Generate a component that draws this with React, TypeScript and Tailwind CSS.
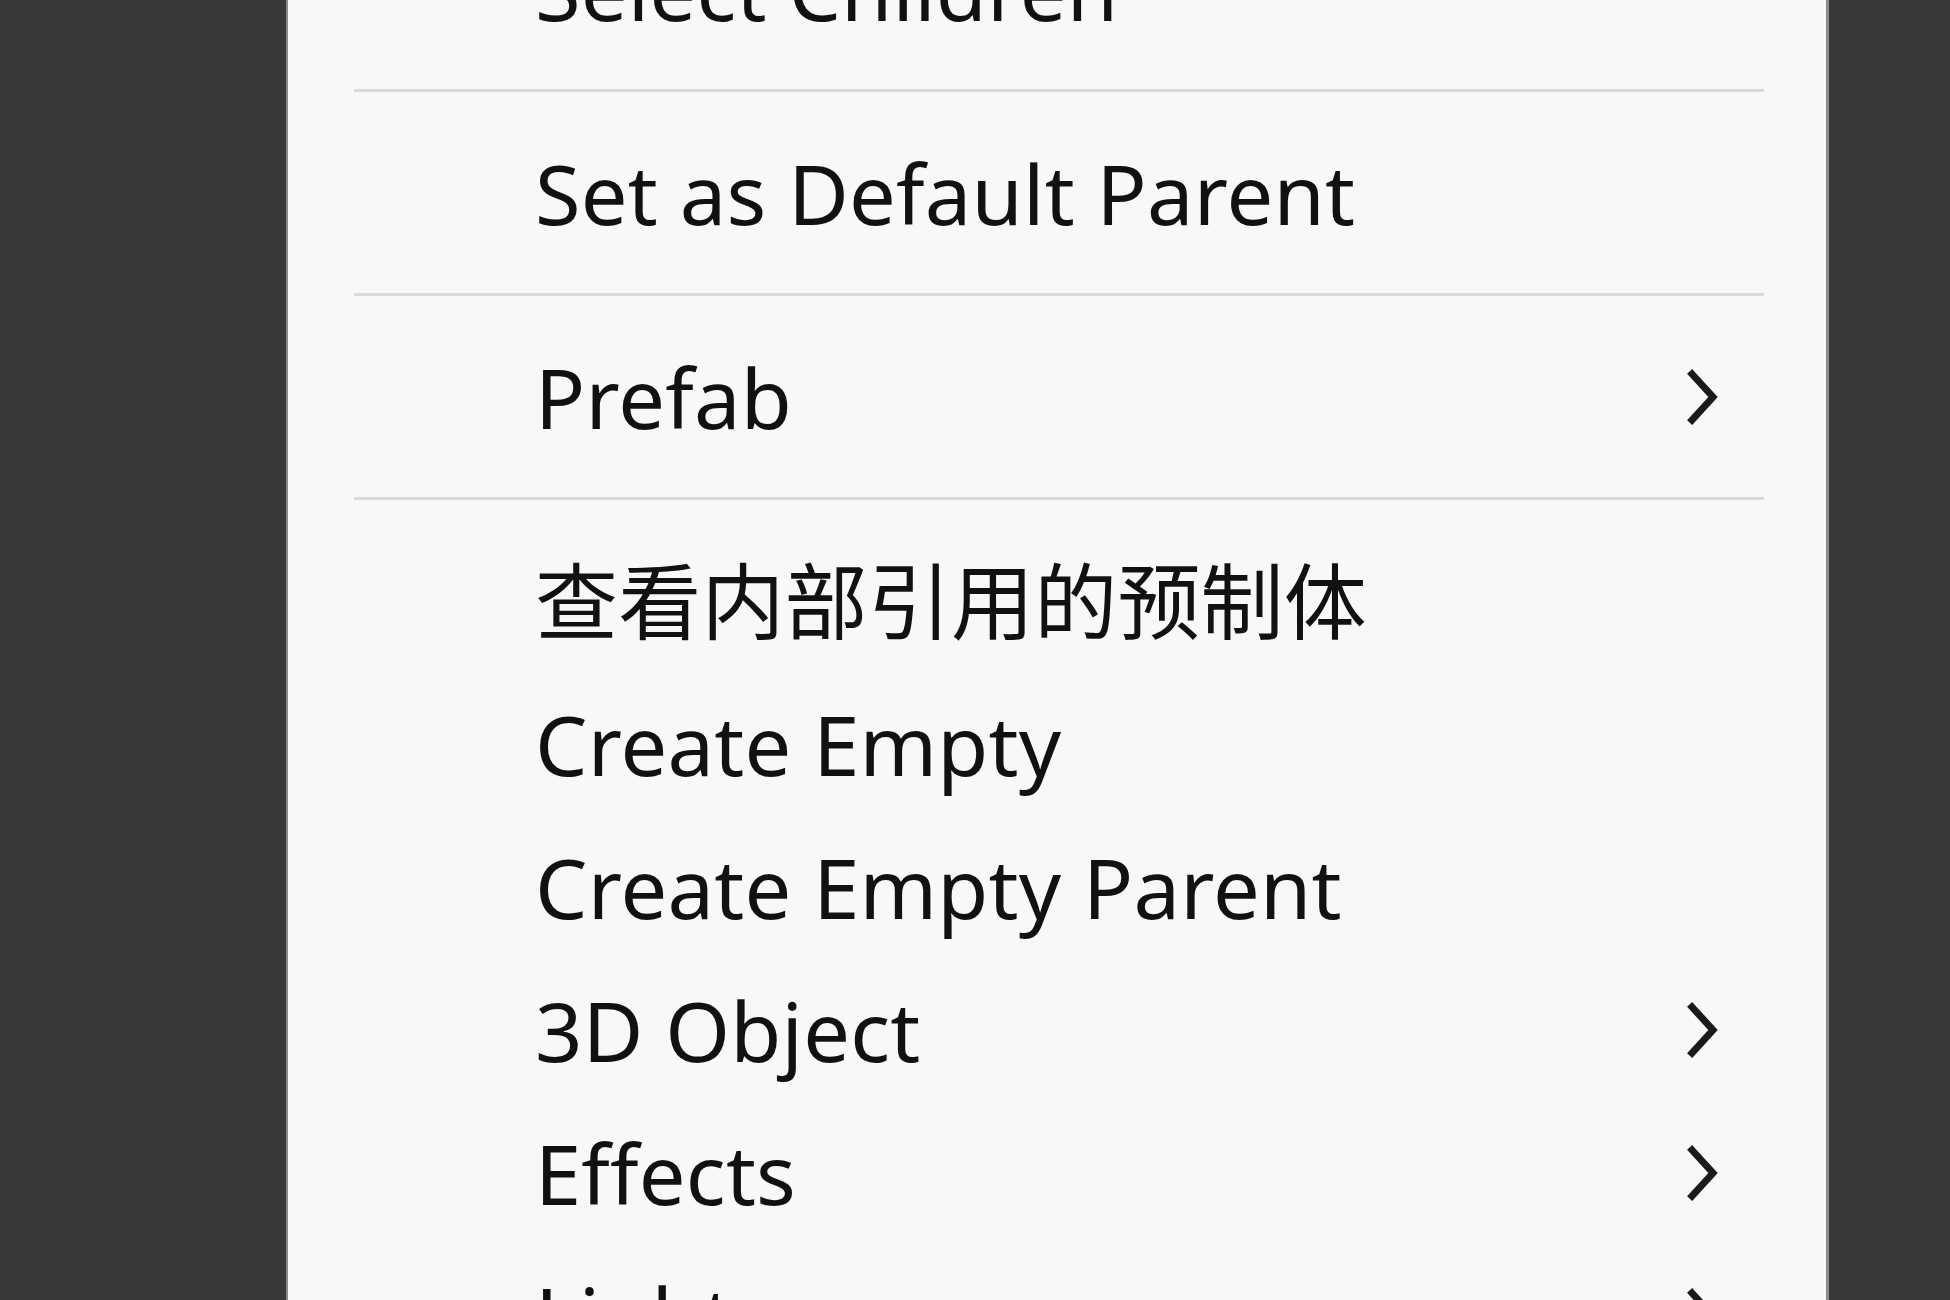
const FONT = '"Noto Sans", "Noto Sans CJK SC", sans-serif';

type Entry =
  | { kind: "item"; label: string; sub?: boolean }
  | { kind: "sep" };

const entries: Entry[] = [
  { kind: "item", label: "Select Children" },
  { kind: "sep" },
  { kind: "item", label: "Set as Default Parent" },
  { kind: "sep" },
  { kind: "item", label: "Prefab", sub: true },
  { kind: "sep" },
  { kind: "item", label: "查看内部引用的预制体" },
  { kind: "item", label: "Create Empty" },
  { kind: "item", label: "Create Empty Parent" },
  { kind: "item", label: "3D Object", sub: true },
  { kind: "item", label: "Effects", sub: true },
  { kind: "item", label: "Light", sub: true },
];

const Chevron = () => (
  <svg width="32" height="58" viewBox="0 0 32 58" fill="none">
    <polyline
      points="6,6 27,29 6,52"
      stroke="#1a1a1a"
      strokeWidth="7"
      strokeLinecap="square"
      strokeLinejoin="miter"
    />
  </svg>
);

const MenuItem = ({ label, sub }: { label: string; sub?: boolean }) => (
  <div className="flex h-[143px] shrink-0 items-center justify-between pl-[247px] pr-[108px]">
    <span className="text-[83px] leading-[143px] text-[#111111] whitespace-nowrap tracking-[0.2px]">
      {label}
    </span>
    {sub && <Chevron />}
  </div>
);

const Separator = () => (
  <div className="flex h-[61px] shrink-0 items-center pl-[66px] pr-[62px]">
    <div className="h-[3px] w-full bg-[#dadada]" />
  </div>
);

export default function App() {
  return (
    <div
      className="flex h-[1300px] w-[1950px] overflow-hidden bg-[#383838]"
      style={{ fontFamily: FONT }}
    >
      <div className="w-[286px] shrink-0" />
      <div className="flex w-[1543px] shrink-0 flex-col overflow-hidden border-l-2 border-r-[3px] border-l-[#8a8a8a] border-r-[#8c8c8c] bg-[#f8f8f8]">
        <div className="-mt-[83px] flex flex-col">
          {entries.map((e, i) =>
            e.kind === "sep" ? (
              <Separator key={i} />
            ) : (
              <MenuItem key={i} label={e.label} sub={e.sub} />
            )
          )}
        </div>
      </div>
    </div>
  );
}
